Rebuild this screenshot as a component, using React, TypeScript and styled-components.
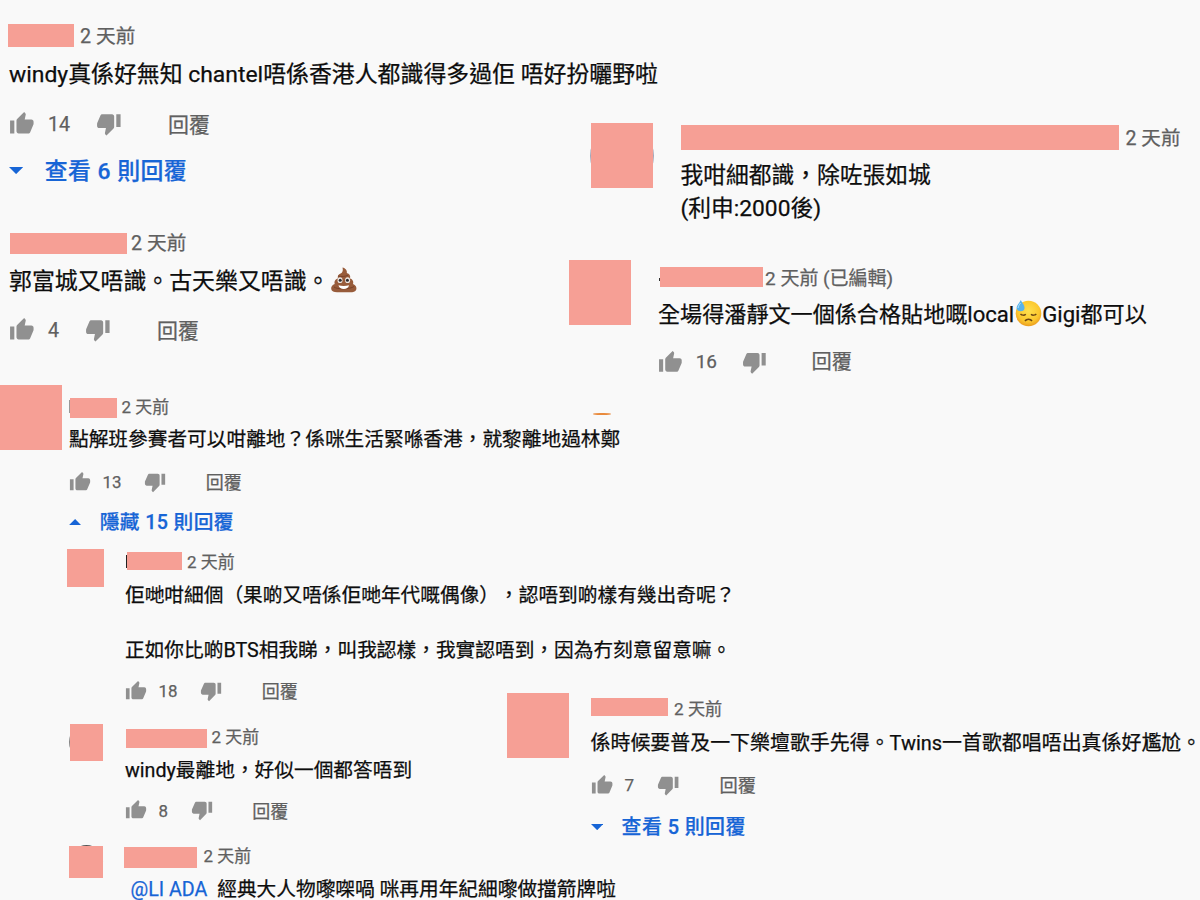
import React from 'react'
import styled, { createGlobalStyle } from 'styled-components'

const GlobalStyle = createGlobalStyle`
    body {
        margin: 0;
        background: #f9f9f9;
    }
`

const Page = styled.main`
    display: grid;
    grid-template-columns: 1200px;
    grid-template-rows: 900px;
    width: 1200px;
    height: 900px;
    overflow: hidden;
    background: #f9f9f9;
    color: #0d0d0d;
    font-family: Roboto, 'Noto Sans CJK TC', sans-serif;
    text-spacing-trim: space-all;
    -webkit-text-stroke: 0.25px currentColor;
`

/* both columns share one grid cell, long lines of one may run under the other */
const Column = styled.div<{ $top: number; $left: number }>`
    grid-area: 1 / 1;
    display: flex;
    flex-direction: column;
    align-items: flex-start;
    padding: ${p => p.$top}px 0 0 ${p => p.$left}px;
`

const CommentBox = styled.article<{ $size: number; $top: number; $left: number }>`
    display: flex;
    flex-shrink: 0;
    align-items: flex-start;
    isolation: isolate;
    margin: ${p => p.$top}px 0 0 ${p => p.$left}px;
    font-size: ${p => p.$size}px;
    white-space: nowrap;
`

const Avatar = styled.div<{ $w: number; $h: number; $gap: number; $top?: number }>`
    position: relative;
    flex-shrink: 0;
    width: ${p => p.$w}px;
    height: ${p => p.$h}px;
    margin: ${p => p.$top || 0}px ${p => p.$gap}px 0 0;
    background: #f69f95;
`

/* the round photo under the square cover */
const Photo = styled.div<{ $x: number; $y: number; $d: number; $color: string }>`
    position: absolute;
    z-index: -1;
    left: ${p => p.$x}px;
    top: ${p => p.$y}px;
    width: ${p => p.$d}px;
    height: ${p => p.$d}px;
    border-radius: 50%;
    background: ${p => p.$color};
`

const Body = styled.div<{ $pad: number }>`
    padding-top: ${p => p.$pad}px;
`

const Header = styled.header`
    display: flex;
    align-items: flex-start;
    height: 24px;
`

const Mask = styled.span<{ $w: number; $h: number; $top: number; $left?: number }>`
    position: relative;
    width: ${p => p.$w}px;
    height: ${p => p.$h}px;
    margin: ${p => p.$top}px 0 0 ${p => p.$left || 0}px;
    background: #f69f95;
`

/* bit of the first letter left of the cover */
const Stroke = styled.i<{ $w: number; $h: number; $y: number; $color: string }>`
    position: absolute;
    top: ${p => p.$y}px;
    right: 100%;
    width: ${p => p.$w}px;
    height: ${p => p.$h}px;
    background: ${p => p.$color};
`

const Time = styled.span<{ $gap: number }>`
    margin-left: ${p => p.$gap}px;
    color: #606060;
    font-size: 0.86em;
    line-height: 25px;
`

const Text = styled.p<{ $line: number; $gap: number; $indent: number }>`
    margin: ${p => p.$gap}px 0 0 ${p => p.$indent}px;
    line-height: ${p => p.$line}px;
    white-space: pre;
`

const Mention = styled.span`
    color: #1765d6;
`

const Actions = styled.div<{ $gap: number }>`
    display: flex;
    align-items: center;
    height: 30px;
    margin-top: ${p => p.$gap}px;
    color: #606060;
`

const Thumb = styled.svg`
    width: 1.12em;
    height: 1.12em;
    fill: #909090;
`

const Count = styled.span`
    margin: 0 1.34em 0 0.68em;
    font-size: 0.857em;
`

const Reply = styled.span`
    margin-left: 2.2em;
    padding-bottom: 2px;
    font-size: 0.915em;
`

const Replies = styled.div<{ $gap: number }>`
    display: flex;
    align-items: center;
    height: 28px;
    margin-top: ${p => p.$gap}px;
    color: #1765d6;
    font-weight: 500;
    letter-spacing: 0.02em;
`

const RepliesText = styled.span`
    padding-bottom: 2.5px;
`

const Arrow = styled.svg`
    width: 0.62em;
    height: 0.31em;
    margin-right: 0.94em;
    fill: #1765d6;
`

const Emoji = styled.svg`
    width: 28px;
    height: 28px;
    vertical-align: -5px;
`

const Speck = styled.div`
    flex-shrink: 0;
    width: 18px;
    height: 2.5px;
    margin: 36px 0 0 86px;
    border-radius: 50%;
    background: #e98a3c;
`

const UP = 'M1 21h4V9H1v12zm22-11c0-1.1-.9-2-2-2h-6.31l.95-4.57.03-.32c0-.41-.17-.79-.44-1.06L14.17 1 7.59 7.59C7.22 7.95 7 8.45 7 9v10c0 1.1.9 2 2 2h9c.83 0 1.54-.5 1.84-1.22l3.02-7.05c.09-.23.14-.47.14-.73v-2z'
const DOWN = 'M15 3H6c-.83 0-1.54.5-1.84 1.22l-3.02 7.05c-.09.23-.14.47-.14.73v2c0 1.1.9 2 2 2h6.31l-.95 4.57-.03.32c0 .41.17.79.44 1.06L9.83 23l6.59-6.59c.36-.36.58-.86.58-1.41V5c0-1.1-.9-2-2-2zm4 0v12h4V3h-4z'

const Poop = () => (
    <Emoji viewBox="-1 0 28 28">
        <path d="M12.5 1.500c3 .8 5 3 4.300 5.600 2.700.6 4 2.900 3.200 5.300 2.700.7 3.900 3.200 3 5.500 2.600.9 4 3.400 3.300 5.500-.8 2.500-3.300 2.800-6 2.800H7c-3 0-5.500-.8-5.800-3.200-.3-2.300 1.200-4.300 3.500-5-.8-2.600.7-5 3.200-5.500-.6-2.500.7-4.200 2.700-5 2-.8 2.700-2.900 1.900-6z" fill="#985c3b" />
        <path d="M4 21c3 2.500 16 2.500 20-.5M8 10c3.500 1 7 .6 10-.8" fill="none" stroke="#7a4229" strokeWidth="1" />
        <ellipse cx="10" cy="14.200" rx="2.500" ry="2.900" fill="#eee8e4" />
        <ellipse cx="17.600" cy="14.200" rx="2.500" ry="2.900" fill="#eee8e4" />
        <circle cx="10.200" cy="14.300" r="1.500" fill="#2c2a2c" />
        <circle cx="17.400" cy="14.300" r="1.500" fill="#2c2a2c" />
        <path d="M8.500 19.300c3 .9 7.500.9 10.500 0-.5 2.500-2.500 3.700-5.200 3.700s-4.800-1.200-5.300-3.700z" fill="#fff" />
    </Emoji>
)

const Sweat = () => (
    <Emoji viewBox="0 0 28 28">
        <defs>
            <radialGradient id="face" cx="50%" cy="40%" r="60%">
                <stop offset="0" stopColor="#ffe04d" />
                <stop offset=".7" stopColor="#fbc72e" />
                <stop offset="1" stopColor="#ea9c1f" />
            </radialGradient>
        </defs>
        <circle cx="14.500" cy="14.500" r="12.800" fill="url(#face)" />
        <path d="M6.500 15c1.300 1.600 4 1.600 5.300.2M17 15.200c1.300 1.400 4 1.400 5.300-.2" fill="none" stroke="#6b4414" strokeWidth="1.300" />
        <path d="M11 22c1.500-2.500 5.500-2.500 7 0" fill="none" stroke="#6b4414" strokeWidth="1.500" />
        <path d="M6.800 1c1.500 3 3.800 5.300 3.800 8 0 2-1.600 3.300-3.900 3.300S2.600 11 2.600 9c0-2.500 2.700-5 4.200-8z" fill="#58b3ec" />
        <path d="M6.500 4c-1.300 2-2.500 3.500-2.400 5" fill="none" stroke="#b5e1fb" strokeWidth="1" />
    </Emoji>
)

type Props = {
    size: number
    top?: number
    left?: number
    avatar?: [number, number, number, number?]
    photo?: [number, number, number, string]
    pad?: number
    mask: [number, number, number, number?]
    stroke?: [number, number, number, string]
    timeGap: number
    time?: string
    text: React.ReactNode
    line: number
    textGap: number
    indent?: number
    likes?: number
    actionGap?: number
    replies?: string
    open?: boolean
    replyGap?: number
}

const Comment = (p: Props) => (
    <CommentBox $size={p.size} $top={p.top || 0} $left={p.left || 0}>
        {p.avatar && (
            <Avatar $w={p.avatar[0]} $h={p.avatar[1]} $gap={p.avatar[2]} $top={p.avatar[3]}>
                {p.photo && <Photo $x={p.photo[0]} $y={p.photo[1]} $d={p.photo[2]} $color={p.photo[3]} />}
            </Avatar>
        )}
        <Body $pad={p.pad || 0}>
            <Header>
                <Mask $w={p.mask[0]} $h={p.mask[1]} $top={p.mask[2]} $left={p.mask[3]}>
                    {p.stroke && <Stroke $w={p.stroke[0]} $h={p.stroke[1]} $y={p.stroke[2]} $color={p.stroke[3]} />}
                </Mask>
                <Time $gap={p.timeGap}>{p.time || '2 天前'}</Time>
            </Header>
            <Text $line={p.line} $gap={p.textGap} $indent={p.indent || 0}>{p.text}</Text>
            {p.likes && (
                <Actions $gap={p.actionGap || 0}>
                    <Thumb viewBox="0 0 24 24"><path d={UP} /></Thumb>
                    <Count>{p.likes}</Count>
                    <Thumb viewBox="0 0 24 24"><path d={DOWN} /></Thumb>
                    <Reply>回覆</Reply>
                </Actions>
            )}
            {p.replies && (
                <Replies $gap={p.replyGap || 0}>
                    <Arrow viewBox="0 0 10 5"><path d={p.open ? 'M0 5h10L5 0z' : 'M0 0h10L5 5z'} /></Arrow>
                    <RepliesText>{p.replies}</RepliesText>
                </Replies>
            )}
        </Body>
    </CommentBox>
)

export default function App() {
    return (
        <>
            <GlobalStyle />
            <Page>
                <Column $top={24} $left={0}>
                    <Comment
                        size={22.9} left={9} mask={[66, 23.5, -0.5, -1]} timeGap={6}
                        text="windy真係好無知 chantel唔係香港人都識得多過佢 唔好扮曬野啦"
                        line={32} textGap={11} likes={14} actionGap={18}
                        replies="查看 6 則回覆" replyGap={17.5}
                    />
                    <Comment
                        size={22.9} left={9} top={46.5} mask={[117.5, 21, 2, 0.5]} timeGap={4}
                        text={<>郭富城又唔識。古天樂又唔識。<Poop /></>}
                        line={32} textGap={10.75} likes={4} actionGap={17.25}
                    />
                    <Comment
                        size={19.7} top={40} avatar={[62, 65, 7]} pad={9.5} mask={[46.5, 20, 3, 1]} timeGap={5}
                        stroke={[0.7, 13, 2, '#999']}
                        text="點解班參賽者可以咁離地？係咪生活緊喺香港，就黎離地過林鄭"
                        line={27.5} textGap={7.75} likes={13} actionGap={13.25}
                        replies="隱藏 15 則回覆" open replyGap={11}
                    />
                    <Comment
                        size={19.7} top={13} left={67} avatar={[37, 38, 21]} pad={1} mask={[55, 18, 2, 2]} timeGap={5}
                        stroke={[1.2, 13, 3, '#222']}
                        text={'佢哋咁細個（果啲又唔係佢哋年代嘅偶像），認唔到啲樣有幾出奇呢？\n\n正如你比啲BTS相我睇，叫我認樣，我實認唔到，因為冇刻意留意嘛。'}
                        line={27.5} textGap={8.25} likes={18} actionGap={11.25}
                    />
                    <Comment
                        size={19.7} top={18} left={70} avatar={[33, 37, 22]} pad={1} mask={[81.5, 19.5, 3.5, 0.5]} timeGap={4.5}
                        photo={[-1.2, 1, 33.5, '#888']}
                        text="windy最離地，好似一個都答唔到"
                        line={27.5} textGap={8.25} likes={8} actionGap={10.75}
                    />
                    <Comment
                        size={19.7} top={18.5} left={69} avatar={[34, 32, 21, 2]} mask={[73, 20.5, 3]} timeGap={6.5}
                        photo={[1, -1.5, 33, '#555']}
                        text={<><Mention>@LI ADA</Mention>{'  經典大人物嚟㗎喎 咪再用年紀細嚟做擋箭牌啦'}</>}
                        line={27.5} textGap={7.75} indent={6.5}
                    />
                </Column>
                <Column $top={123} $left={507}>
                    <Comment
                        size={22.75} left={83.5} avatar={[62.5, 65, 27.5]} pad={3} mask={[438, 25.5, -1.5]} timeGap={7}
                        photo={[-0.5, 0.7, 64, '#a3a6b8']}
                        text={'我咁細都識，除咗張如城\n(利申:2000後)'}
                        line={32.3} textGap={10.3}
                    />
                    <Comment
                        size={22.1} left={62} top={35.6} avatar={[62, 65, 27]} pad={5.5} mask={[103, 19.5, 1.5, 2]} timeGap={2}
                        stroke={[1.5, 3, 11, '#333']}
                        time="2 天前 (已編輯)"
                        text={<>全場得潘靜文一個係合格貼地嘅local<Sweat />Gigi都可以</>}
                        line={32} textGap={8.5} likes={16} actionGap={16.5}
                    />
                    <Speck />
                    <Comment
                        size={19.95} top={277.5} avatar={[62, 65, 21.5]} pad={4.5} mask={[77, 17.5, 1, 0.5]} timeGap={6}
                        text="係時候要普及一下樂壇歌手先得。Twins一首歌都唱唔出真係好尷尬。"
                        line={27.5} textGap={8.5} likes={7} actionGap={13}
                        replies="查看 5 則回覆" replyGap={12.5}
                    />
                </Column>
            </Page>
        </>
    )
}
